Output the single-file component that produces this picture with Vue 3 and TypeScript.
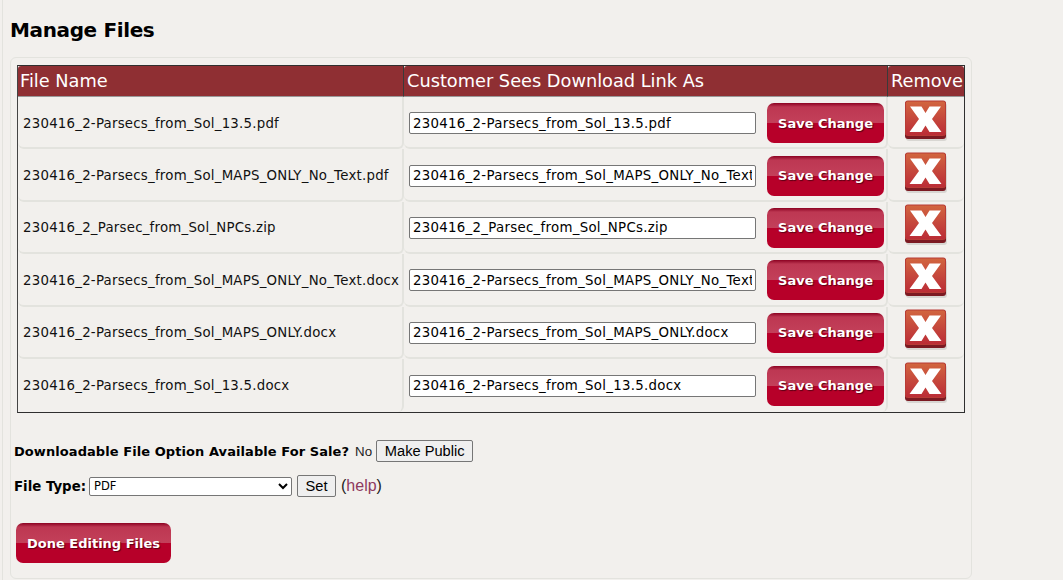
<script setup lang="ts">
const files: { name: string; link: string }[] = [
  { name: '230416_2-Parsecs_from_Sol_13.5.pdf', link: '230416_2-Parsecs_from_Sol_13.5.pdf' },
  { name: '230416_2-Parsecs_from_Sol_MAPS_ONLY_No_Text.pdf', link: '230416_2-Parsecs_from_Sol_MAPS_ONLY_No_Text.pdf' },
  { name: '230416_2_Parsec_from_Sol_NPCs.zip', link: '230416_2_Parsec_from_Sol_NPCs.zip' },
  { name: '230416_2-Parsecs_from_Sol_MAPS_ONLY_No_Text.docx', link: '230416_2-Parsecs_from_Sol_MAPS_ONLY_No_Text.docx' },
  { name: '230416_2-Parsecs_from_Sol_MAPS_ONLY.docx', link: '230416_2-Parsecs_from_Sol_MAPS_ONLY.docx' },
  { name: '230416_2-Parsecs_from_Sol_13.5.docx', link: '230416_2-Parsecs_from_Sol_13.5.docx' },
]
</script>

<template>
  <div class="page">
    <h1 class="title">Manage Files</h1>
    <div class="panel">
      <table class="files">
        <thead>
          <tr>
            <th class="c1">File Name</th>
            <th class="c2">Customer Sees Download Link As</th>
            <th class="c3">Remove</th>
          </tr>
        </thead>
        <tbody>
          <tr v-for="f in files" :key="f.name">
            <td class="name">{{ f.name }}</td>
            <td class="link">
              <div class="link-row">
                <input class="link-input" type="text" :value="f.link" />
                <button class="red save" type="button">Save Change</button>
              </div>
            </td>
            <td class="remove">
              <svg class="x" width="44" height="42" viewBox="0 0 44 42" aria-label="Remove">
                <defs>
                  <linearGradient id="xg" x1="0" y1="0" x2="0" y2="1">
                    <stop offset="0" stop-color="#d2663f" />
                    <stop offset="0.5" stop-color="#c6483c" />
                    <stop offset="1" stop-color="#bb2c36" />
                  </linearGradient>
                </defs>
                <rect x="2" y="3" width="41" height="38" rx="3" fill="#d8d6d2" />
                <rect x="1" y="1" width="41" height="38" rx="3" fill="#7c1a22" />
                <rect x="1.5" y="1" width="40" height="34.5" rx="2" fill="url(#xg)" stroke="#b83b35" stroke-width="1" />
                <path d="M6 6.5H17.5L21.5 13L25.5 6.5H37L28 19L37.5 32H25.5L21.5 25.5L17.5 32H5.5L15 19Z" fill="#fff" />
              </svg>
            </td>
          </tr>
        </tbody>
      </table>

      <div class="sale">
        <b>Downloadable File Option Available For Sale?</b>
        <span class="no">No</span>
        <button class="plain" type="button">Make Public</button>
      </div>

      <div class="type">
        <b>File Type:</b>
        <select class="type-select">
          <option>PDF</option>
        </select>
        <button class="plain" type="button">Set</button>
        <span class="help">(<a>help</a>)</span>
      </div>

      <button class="red done" type="button">Done Editing Files</button>
    </div>
  </div>
</template>

<style>
html, body { margin: 0; background: #f2f0ed; }
</style>

<style scoped>
.page {
  height: 580px;
  box-sizing: border-box;
  width: 1063px;
  overflow: hidden;
  padding: 0 0 0 2px;
  font-family: "DejaVu Sans", Verdana, sans-serif;
  color: #000;
  background: linear-gradient(#e3e3de, #e3e3de) 2px 0 / 1px 100% no-repeat, #f2f0ed;
}
.title {
  margin: 0;
  padding: 19px 0 0 8px;
  height: 38px;
  font-size: 20px;
  line-height: 23px;
  font-weight: 700;
  letter-spacing: -0.37px;
}
.panel {
  width: 962px;
  height: 522px;
  box-sizing: border-box;
  margin-left: 8px;
  border: 1px solid #e3e3de;
  border-radius: 6px;
  padding: 7px 6px 0 6px;
}
.files {
  width: 948px;
  table-layout: fixed;
  border-collapse: separate;
  border-spacing: 0;
  border: 1px solid #2f2f2f;
  border-left-color: #444;
  font-size: 13px;
}
.files th {
  height: 31px;
  padding: 0 0 0 2px;
  box-sizing: border-box;
  background: #8f2f33;
  color: #fff;
  font-size: 17.75px;
  font-weight: 400;
  text-align: left;
  border-right: 1px solid #3a3a3a;
  border-bottom: 1px solid #999;
  border-top-left-radius: 3px;
}
.files th.c2 { padding-left: 3px; }
.files th.c3 { border-right: 0; border-top-right-radius: 3px; padding-left: 3px; }
.c1 { width: 386px; }
.c2 { width: 484px; }
.files td {
  height: 52.4px;
  box-sizing: border-box;
  padding: 2px 0 0 5px;
  border-right: 2px solid #e3e3de;
  border-bottom: 2px solid #e3e3de;
  border-radius: 0 0 6px 6px;
}
.files tbody tr:last-child td { border-bottom: 0; padding-top: 0; height: 53.4px; }
.files td.remove { border-right: 0; padding-left: 0; }
.name {
  font-size: 13.33px;
  letter-spacing: 0.23px;
  color: #111;
  white-space: nowrap;
}
.link-row {
  display: flex;
  align-items: center;
  gap: 11px;
}
.link-input {
  width: 347px;
  height: 22px;
  box-sizing: border-box;
  padding: 0 3px;
  border: 1px solid #767676;
  border-radius: 2px;
  background: #fff;
  font: 13.33px "DejaVu Sans", Verdana, sans-serif;
  letter-spacing: 0.29px;
  color: #000;
}
.red {
  border: 0;
  padding: 0;
  color: #fff;
  font-family: "DejaVu Sans", Verdana, sans-serif;
  font-weight: 700;
  font-size: 13px;
  border-radius: 7px;
  text-shadow: 1px 1px 1px #5a0014;
  background: linear-gradient(#8c0222 0, #bd3752 10%, #c3405a 50%, #b70029 50%, #b70029 100%);
}
.save { width: 117px; height: 40px; }
.done {
  display: block;
  width: 155px;
  height: 40px;
  margin: 26px 0 0 -1px;
}
.x {
  display: block;
  margin: -5px 0 0 16px;
}
.sale {
  display: flex;
  align-items: center;
  height: 22px;
  margin: 27px 0 0 -3px;
  font-size: 13px;
  letter-spacing: 0.07px;
}
.no {
  margin: 0 -1px 0 6px;
  font: 13.33px "Liberation Sans", Arial, sans-serif;
  color: #222;
}
.plain {
  height: 22px;
  box-sizing: border-box;
  padding: 0 7.5px;
  margin-left: 5px;
  border: 1px solid #767676;
  border-radius: 2px;
  background: #efefef;
  font: 14.67px "Liberation Sans", Arial, sans-serif;
  letter-spacing: 0;
  color: #000;
}
.type {
  display: flex;
  align-items: center;
  height: 22px;
  margin: 13px 0 0 -3px;
  font-size: 13.33px;
}
.type-select {
  width: 203px;
  height: 19px;
  margin-left: 3px;
  box-sizing: border-box;
  border: 1px solid #767676;
  border-radius: 2px;
  background: #fff;
  font: 11.5px "DejaVu Sans", Verdana, sans-serif;
  color: #000;
}
.help {
  margin-left: 5px;
  font: 16px "Liberation Sans", Arial, sans-serif;
  color: #222;
}
.help a { color: #8e3a5e; }
</style>
